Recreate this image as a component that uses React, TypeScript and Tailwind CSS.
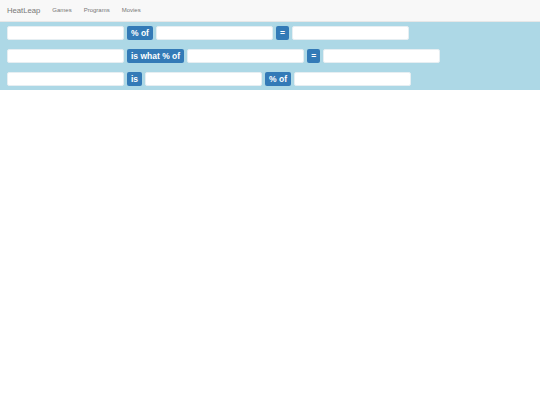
import React from "react";

const Field = () => (
  <input
    type="text"
    className="w-[117px] h-[14px] rounded-[2px] bg-white border border-[#e6eef2] outline-none"
  />
);

const Tag = ({ children }: { children: React.ReactNode }) => (
  <span className="h-[14px] px-[4px] rounded-[2px] bg-[#337ab7] text-white font-bold text-[8.5px] leading-[14px] whitespace-nowrap">
    {children}
  </span>
);

export default function App() {
  return (
    <div className="min-h-screen bg-white font-['Liberation_Sans',Arial,sans-serif]">
      <nav className="h-[22px] bg-[#f8f8f8] border-b border-[#e7e7e7] flex items-center px-[7px]">
        <span className="text-[#777] text-[7.7px] mr-[12px]">HeatLeap</span>
        <div className="flex items-center gap-[12px] text-[#777] text-[6px]">
          <span>Games</span>
          <span>Programs</span>
          <span>Movies</span>
        </div>
      </nav>
      <div className="bg-[#add8e6] px-[7px] py-[4px] flex flex-col gap-[9px]">
        <div className="flex items-center gap-[3px]">
          <Field />
          <Tag>% of</Tag>
          <Field />
          <Tag>=</Tag>
          <Field />
        </div>
        <div className="flex items-center gap-[3px]">
          <Field />
          <Tag>is what % of</Tag>
          <Field />
          <Tag>=</Tag>
          <Field />
        </div>
        <div className="flex items-center gap-[3px]">
          <Field />
          <Tag>is</Tag>
          <Field />
          <Tag>% of</Tag>
          <Field />
        </div>
      </div>
    </div>
  );
}
